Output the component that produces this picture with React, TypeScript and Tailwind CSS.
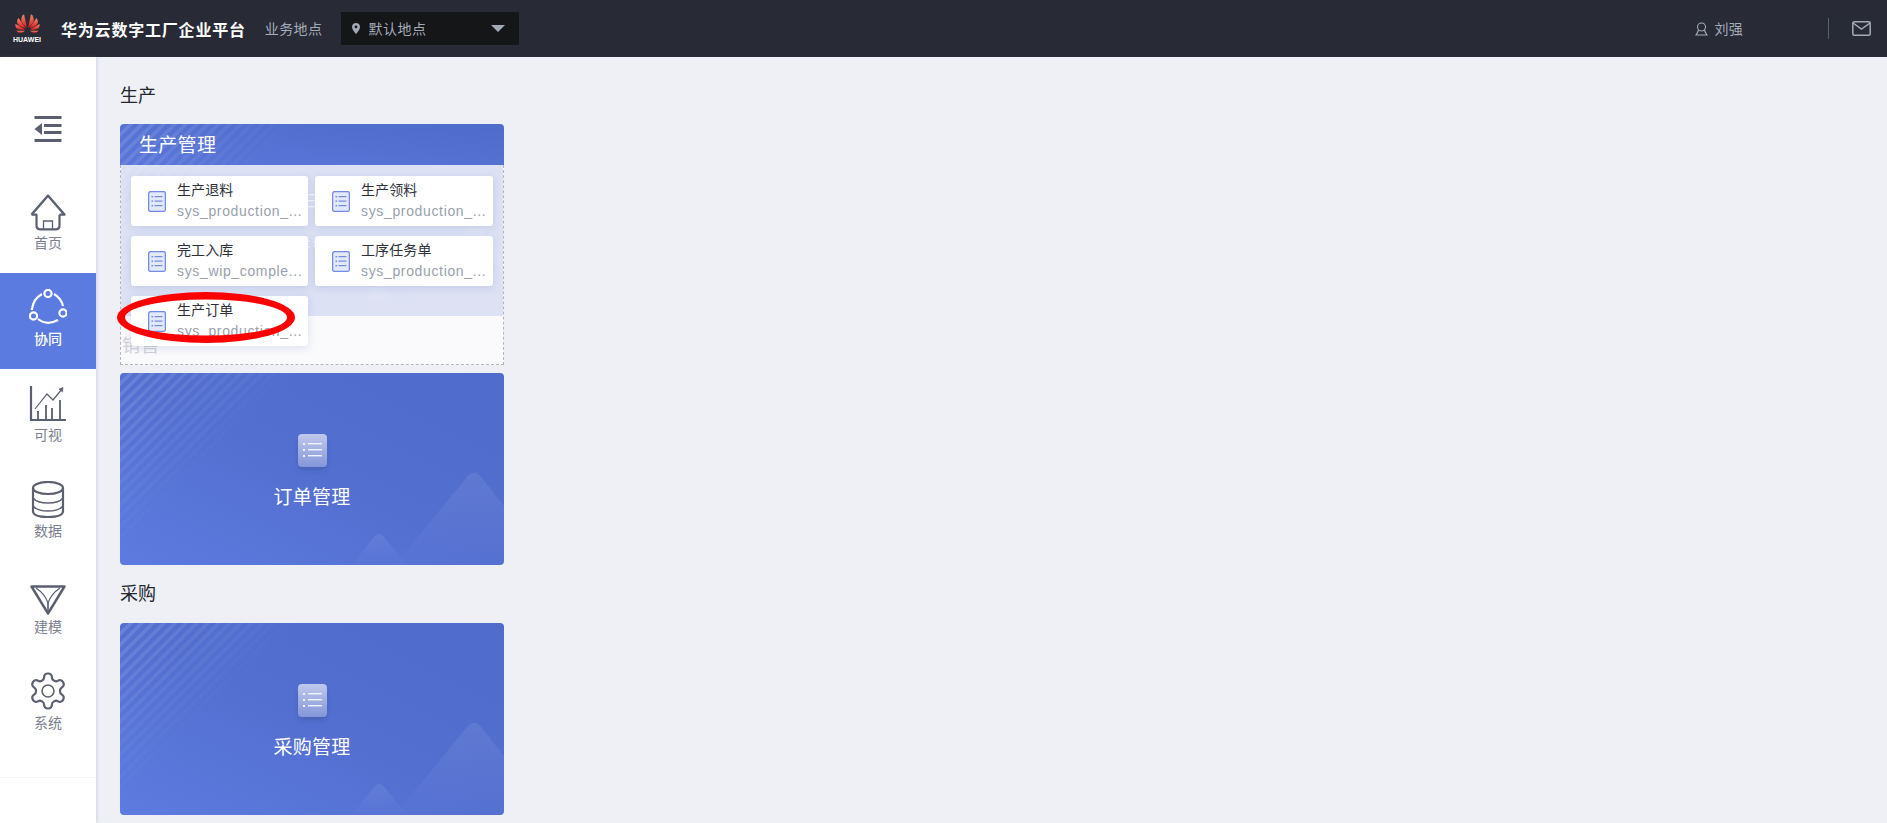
import React from 'react';

const FONT = 'font-["Noto_Sans_CJK_SC","Noto_Sans",sans-serif]';

// striped corner and the two mountains behind every blue card
const CardArt = ({ id }: { id: string }) => (
  <svg className="absolute left-0 top-0 h-[192px] w-[384px]" viewBox="0 0 384 192" fill="none">
    <defs>
      <linearGradient id={`${id}-fade`} gradientUnits="userSpaceOnUse" x1="0" y1="0" x2="90" y2="90">
        <stop offset="0" stopColor="#fff" stopOpacity="0.14" />
        <stop offset="1" stopColor="#fff" stopOpacity="0" />
      </linearGradient>
      <linearGradient id={`${id}-hill`} x1="0" y1="0" x2="0" y2="1">
        <stop offset="0" stopColor="#fff" stopOpacity="0.08" />
        <stop offset="1" stopColor="#fff" stopOpacity="0.01" />
      </linearGradient>
    </defs>
    <g stroke={`url(#${id}-fade)`} strokeWidth="3.5">
      {Array.from({ length: 17 }).map((_, i) => (
        <line key={i} x1={-2} y1={i * 11 + 2} x2={i * 11 + 2} y2={-2} />
      ))}
    </g>
    <path d="M232 192L253 165Q259 157 265 165L287 192Z" fill={`url(#${id}-hill)`} />
    <path d="M275 192L347 104Q354 96 361 104L384 133V192Z" fill={`url(#${id}-hill)`} />
  </svg>
);

const ListGlyph = () => (
  <svg width="29" height="33" viewBox="0 0 29 33" className="rounded-sm shadow-md">
    <defs>
      <linearGradient id="glyph" x1="0" y1="0" x2="0" y2="1">
        <stop offset="0" stopColor="#c0c8ec" />
        <stop offset="1" stopColor="#8396d8" />
      </linearGradient>
    </defs>
    <rect width="29" height="33" rx="1.5" fill="url(#glyph)" />
    <g fill="#f1f3fc">
      <rect x="5" y="9" width="2" height="2" />
      <rect x="5" y="15" width="2" height="2" />
      <rect x="5" y="21" width="2" height="2" />
      <rect x="10" y="9" width="14" height="1.4" />
      <rect x="10" y="15" width="14" height="1.4" />
      <rect x="10" y="21" width="14" height="1.4" />
    </g>
  </svg>
);

const BigCard = ({ id, title }: { id: string; title: string }) => (
  <div className="relative flex h-[192px] w-[384px] flex-col items-center overflow-hidden rounded-sm bg-gradient-to-tr from-[#5d7be0] via-[#536fd0] to-[#4f6ccb]">
    <CardArt id={id} />
    <div className="relative mt-[61px] flex">
      <ListGlyph />
    </div>
    <div className="relative mt-[16px] text-[19px] leading-[26px] tracking-[0.3px] text-white">{title}</div>
  </div>
);

const MiniDoc = () => (
  <svg width="18" height="21" viewBox="0 0 18 21" fill="none" className="shrink-0">
    <rect x="0.6" y="0.6" width="16.8" height="19.8" rx="2" fill="#e3e8fb" stroke="#718ce6" strokeWidth="1.3" />
    <g fill="#718ce6">
      <rect x="3.5" y="5" width="1.6" height="1.4" />
      <rect x="3.5" y="9.5" width="1.6" height="1.4" />
      <rect x="3.5" y="14" width="1.6" height="1.4" />
      <rect x="6.5" y="5" width="8" height="1.2" />
      <rect x="6.5" y="9.5" width="8" height="1.2" />
      <rect x="6.5" y="14" width="8" height="1.2" />
    </g>
  </svg>
);

const Tile = ({ title, code }: { title: string; code: string }) => (
  <div className="flex h-[50px] min-w-0 items-center rounded-[3px] bg-white pl-[17px] shadow-[0_2px_8px_rgba(90,110,190,0.18)]">
    <MiniDoc />
    <div className="ml-[11px] min-w-0 flex-1">
      <div className="-mt-[2px] mb-[1px] text-[14px] leading-[20px] tracking-[0.1px] text-[#2d3038]">{title}</div>
      <div className="whitespace-nowrap text-[14px] leading-[22px] tracking-[0.65px] text-[#9a9fac] font-['Liberation_Sans',sans-serif]">{code}</div>
    </div>
  </div>
);

const GRAY = '#5b6070';

const NavIcon = ({ name, active }: { name: string; active?: boolean }) => {
  const c = active ? '#fff' : GRAY;
  switch (name) {
    case 'home':
      return (
        <svg width="36" height="38" viewBox="0 0 36 36" preserveAspectRatio="none" fill="none" stroke={c} strokeWidth="2.2">
          <path d="M1.5 20.5L18 2.5L34.5 20.5H29.5" strokeLinejoin="round" />
          <path d="M1.5 20.5H6.5V30.5Q6.5 34.5 10.5 34.5H25.5Q29.5 34.5 29.5 30.5V20.5" strokeLinejoin="round" />
          <path d="M13.5 34V26.5H22.5V34" strokeWidth="1.3" />
        </svg>
      );
    case 'sync':
      return (
        <svg width="38" height="38" viewBox="0 0 38 38" fill="none" stroke={c} strokeWidth="2.2">
          <path d="M13 5Q4 10 2.8 21" />
          <path d="M25 5Q32 9 34 17" />
          <path d="M9 30Q18 37 29 31" />
          <circle cx="19" cy="4.5" r="3.6" />
          <circle cx="34" cy="24" r="3.6" />
          <circle cx="4.5" cy="27" r="3.6" />
        </svg>
      );
    case 'chart':
      return (
        <svg width="38" height="38" viewBox="0 0 38 38" fill="none" stroke={c}>
          <path d="M2 1V35H37" strokeWidth="2.2" />
          <path d="M6 24L18 9L24 15L33 4" strokeWidth="1.2" />
          <path d="M30 4L34 2.5L33.5 7Z" fill={c} strokeWidth="0.6" />
          <path d="M9 35V26M17 35V20M23 35V23M31 35V15" strokeWidth="1.8" />
        </svg>
      );
    case 'db':
      return (
        <svg width="34" height="38" viewBox="0 0 34 38" fill="none" stroke={c} strokeWidth="2.2">
          <ellipse cx="17" cy="7" rx="15" ry="6" />
          <path d="M2 7V30Q2 36 17 36Q32 36 32 30V7" />
          <path d="M2 17Q6 22 17 22Q28 22 32 17" strokeWidth="1.4" />
          <path d="M2 25Q6 30 17 30Q28 30 32 25" strokeWidth="1.4" />
        </svg>
      );
    case 'model':
      return (
        <svg width="36" height="30" viewBox="0 0 36 30" fill="none" stroke={c} strokeWidth="2.4">
          <path d="M1.5 1.5H34.5L18 28.5Z" strokeLinejoin="round" />
          <path d="M6 3Q15 9 18 18Q21 9 30 3" strokeWidth="1.2" />
          <path d="M18 18V27" strokeWidth="1.6" />
        </svg>
      );
    case 'gear':
      return (
        <svg width="42" height="42" viewBox="0 0 24 24" fill="none" stroke={c} strokeWidth="1.25" strokeLinejoin="round" className="-my-[1px]">
          <path d="M12.22 2h-.44a2 2 0 0 0-2 2v.18a2 2 0 0 1-1 1.73l-.43.25a2 2 0 0 1-2 0l-.15-.08a2 2 0 0 0-2.73.73l-.22.38a2 2 0 0 0 .73 2.73l.15.1a2 2 0 0 1 1 1.72v.51a2 2 0 0 1-1 1.74l-.15.09a2 2 0 0 0-.73 2.73l.22.38a2 2 0 0 0 2.73.73l.15-.08a2 2 0 0 1 2 0l.43.25a2 2 0 0 1 1 1.73V20a2 2 0 0 0 2 2h.44a2 2 0 0 0 2-2v-.18a2 2 0 0 1 1-1.73l.43-.25a2 2 0 0 1 2 0l.15.08a2 2 0 0 0 2.73-.73l.22-.39a2 2 0 0 0-.73-2.73l-.15-.08a2 2 0 0 1-1-1.74v-.5a2 2 0 0 1 1-1.74l.15-.09a2 2 0 0 0 .73-2.73l-.22-.38a2 2 0 0 0-2.73-.73l-.15.08a2 2 0 0 1-2 0l-.43-.25a2 2 0 0 1-1-1.73V4a2 2 0 0 0-2-2z" />
          <circle cx="12" cy="12" r="3.4" strokeWidth="0.9" />
        </svg>
      );
    default:
      return null;
  }
};

const navItems = [
  { icon: 'home', label: '首页' },
  { icon: 'sync', label: '协同', active: true },
  { icon: 'chart', label: '可视' },
  { icon: 'db', label: '数据' },
  { icon: 'model', label: '建模' },
  { icon: 'gear', label: '系统' },
];

const tiles = [
  { title: '生产退料', code: 'sys_production_...' },
  { title: '生产领料', code: 'sys_production_...' },
  { title: '完工入库', code: 'sys_wip_comple...' },
  { title: '工序任务单', code: 'sys_production_...' },
  { title: '生产订单', code: 'sys_production_...' },
];

const HuaweiLogo = () => (
  <div className="flex w-[28px] flex-col items-center">
    <svg width="25" height="21" viewBox="0 0 27 21">
      <defs>
        <linearGradient id="petal" x1="0" y1="0" x2="0" y2="1">
          <stop offset="0" stopColor="#f6896c" />
          <stop offset="1" stopColor="#d61a20" />
        </linearGradient>
      </defs>
      <g fill="url(#petal)">
        <path d="M12.8 15L9.8 0.5Q6.6 2.5 6.8 7Q7.4 11 12.8 15Z" />
        <path d="M14.2 15L17.2 0.5Q20.4 2.5 20.2 7Q19.6 11 14.2 15Z" />
        <path d="M11.6 15.6L3.8 4.5Q1.2 8 3 11Q5 14 11.6 15.6Z" />
        <path d="M15.4 15.6L23.2 4.5Q25.8 8 24 11Q22 14 15.4 15.6Z" />
        <path d="M11 17L0.5 11Q-0.2 15 3 16.5Q6 17.8 11 17Z" />
        <path d="M16 17L26.5 11Q27.2 15 24 16.5Q21 17.8 16 17Z" />
        <path d="M10.6 18.2H1.5Q4 21 7 20.6Q9 20.2 10.6 18.2Z" />
        <path d="M16.4 18.2H25.5Q23 21 20 20.6Q18 20.2 16.4 18.2Z" />
      </g>
    </svg>
    <span className="mt-[2px] text-[7px] font-bold leading-[8px] text-white font-['Liberation_Sans',sans-serif]">HUAWEI</span>
  </div>
);

const App = () => (
  <div className={`flex h-screen w-full flex-col overflow-hidden bg-[#eef0f5] ${FONT}`}>
    <header className="flex h-[57px] shrink-0 items-center bg-[#282b35] pl-[13px] pr-[16px]">
      <HuaweiLogo />
      <div className="ml-[20px] text-[16px] font-bold leading-[24px] tracking-[0.8px] text-white">华为云数字工厂企业平台</div>
      <div className="ml-[19px] text-[14px] tracking-[0.4px] text-[#a3aab8]">业务地点</div>
      <div className="ml-[19px] flex h-[33px] w-[178px] items-center bg-[#151618] pl-[11px] pr-[14px]">
        <svg width="8" height="11" viewBox="0 0 8 11" fill="#a3aab8">
          <path d="M4 0C1.8 0 0 1.7 0 3.9C0 6.5 4 11 4 11S8 6.5 8 3.9C8 1.7 6.2 0 4 0ZM4 5.3A1.4 1.4 0 1 1 4 2.5A1.4 1.4 0 0 1 4 5.3Z" />
        </svg>
        <span className="ml-[8px] flex-1 text-[14px] tracking-[0.5px] text-[#a3aab8]">默认地点</span>
        <span className="h-0 w-0 border-x-[7px] border-t-[7px] border-x-transparent border-t-[#a3aab8]" />
      </div>
      <div className="ml-auto flex items-center">
        <svg width="13" height="14" viewBox="0 0 13 14" fill="none" stroke="#a3aab8" strokeWidth="1.1">
          <circle cx="6.5" cy="5" r="4" />
          <path d="M3.5 8C3 10 2 11.5 1 13H12C11 11.5 10 10 9.5 8" />
        </svg>
        <span className="ml-[6px] text-[14px] tracking-[0.3px] text-[#a3aab8]">刘强</span>
        <span className="ml-[85px] h-[21px] w-px bg-[#5a5f70]" />
        <svg className="ml-[23px]" width="19" height="15" viewBox="0 0 19 15" fill="none" stroke="#a3aab8" strokeWidth="1.5">
          <rect x="0.8" y="0.8" width="17.4" height="13.4" rx="1.5" />
          <path d="M1 2L9.5 8L18 2" />
        </svg>
      </div>
    </header>
    <div className="flex min-h-0 flex-1">
      <aside className="flex w-[96px] shrink-0 flex-col bg-white pt-[24px] shadow-[1px_0_3px_rgba(120,130,180,0.25)]">
        <div className="flex h-[96px] items-center justify-center">
          <svg width="28" height="28" viewBox="0 0 28 28" fill={GRAY}>
            <rect x="0.5" y="1" width="27" height="3" />
            <rect x="10" y="9" width="17.5" height="3" />
            <rect x="10" y="16" width="17.5" height="3" />
            <rect x="0.5" y="24" width="27" height="3" />
            <path d="M0.5 14L8 8V20Z" />
          </svg>
        </div>
        {navItems.map((item) => (
          <div
            key={item.label}
            className={`flex h-[96px] flex-col items-center justify-center pb-[6px] ${item.active ? 'bg-[#5b7be0] text-white' : 'text-[#7b808e]'}`}
          >
            <div className="flex h-[40px] items-end pb-[1px]">
              <NavIcon name={item.icon} active={item.active} />
            </div>
            <span className={`text-[14px] leading-[20px] ${item.active ? 'font-medium' : ''}`}>{item.label}</span>
          </div>
        ))}
        <div className="mt-[24px] border-t border-[#f4f4f7]" />
      </aside>
      <main className="min-w-0 flex-1 pl-[24px] pt-[19px]">
        <h2 className="text-[18px] font-normal leading-[36px] text-[#23262e]">生产</h2>
        <div className="mt-[12px] w-[384px]">
          <div className="relative h-[41px] overflow-hidden rounded-t-sm bg-gradient-to-tr from-[#5a76da] to-[#4f6ccb]">
            <CardArt id="head" />
            <div className="relative pl-[19px] text-[19px] leading-[39px] tracking-[0.3px] text-white">生产管理</div>
          </div>
          <div className="relative h-[200px] border border-t-0 border-dashed border-[#b4b6bb] bg-[#fafafc]">
            {/* the card's own face shows faintly behind the tiles */}
            <div className="absolute inset-x-0 top-0 h-[151px] overflow-hidden bg-[#dce1f3]">
              <div className="absolute left-[-1px] top-[-41px] flex h-[192px] w-[384px] flex-col items-center">
                <CardArt id="ghost" />
                <svg className="relative mt-[61px]" width="29" height="33" viewBox="0 0 29 33" fill="#fff" fillOpacity="0.75">
                  <rect x="5" y="9" width="2" height="2" />
                  <rect x="5" y="15" width="2" height="2" />
                  <rect x="5" y="21" width="2" height="2" />
                  <rect x="10" y="9" width="14" height="1.4" />
                  <rect x="10" y="15" width="14" height="1.4" />
                  <rect x="10" y="21" width="14" height="1.4" />
                </svg>
                <div className="relative mt-[16px] text-[19px] leading-[26px] tracking-[0.3px] text-white/70">生产管理</div>
              </div>
            </div>
            <div className="absolute left-[1px] top-[166px] h-[40px] overflow-hidden text-[18px] leading-[26px] tracking-[1px] text-[#cfd1d6]">销售</div>
            <div className="relative grid grid-cols-[177px_178px] gap-x-[7px] gap-y-[10px] pl-[10px] pt-[11px]">
              {tiles.map((t) => (
                <Tile key={t.title} title={t.title} code={t.code} />
              ))}
            </div>
            {/* red hand-drawn mark from the screenshot */}
            <svg className="absolute left-[-4px] top-[127px]" width="178" height="51" viewBox="0 0 178 51">
              <path
                fillRule="evenodd"
                fill="#f00"
                d="M0 25.5A89 25.5 0 1 1 178 25.5A89 25.5 0 1 1 0 25.5ZM8 25.5A81 18 0 1 0 170 25.5A81 18 0 1 0 8 25.5Z"
              />
            </svg>
          </div>
        </div>
        <div className="mt-[8px]">
          <BigCard id="order" title="订单管理" />
        </div>
        <h2 className="mt-[9px] text-[18px] font-normal leading-[36px] text-[#23262e]">采购</h2>
        <div className="mt-[13px]">
          <BigCard id="buy" title="采购管理" />
        </div>
      </main>
    </div>
  </div>
);

export default App;
